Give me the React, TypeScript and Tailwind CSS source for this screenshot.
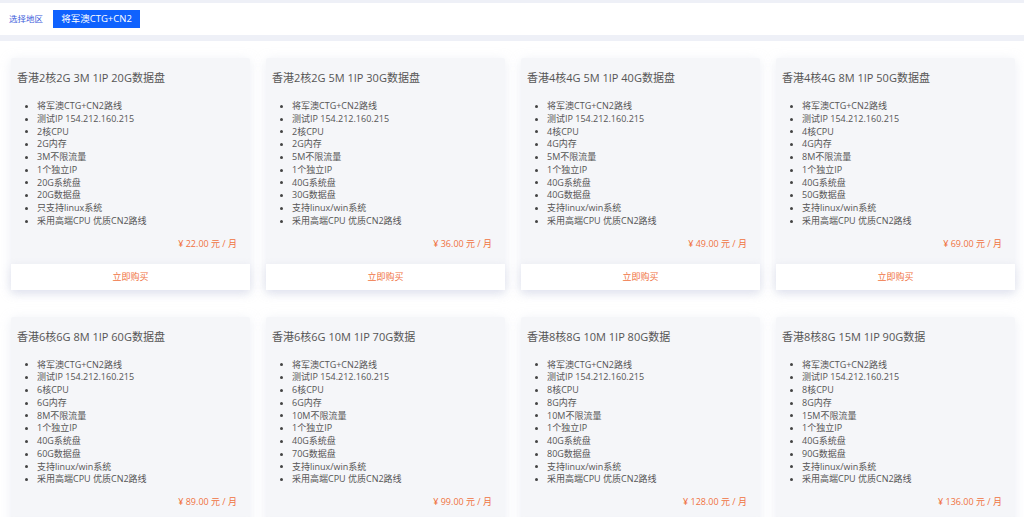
import React from "react";

type Plan = {
  title: string;
  cpu: string;
  ram: string;
  bw: string;
  sys: string;
  data: string;
  os: string;
  price: string;
};

const plans: Plan[] = [
  { title: "香港2核2G 3M 1IP 20G数据盘", cpu: "2核CPU", ram: "2G内存", bw: "3M不限流量", sys: "20G系统盘", data: "20G数据盘", os: "只支持linux系统", price: "22.00" },
  { title: "香港2核2G 5M 1IP 30G数据盘", cpu: "2核CPU", ram: "2G内存", bw: "5M不限流量", sys: "40G系统盘", data: "30G数据盘", os: "支持linux/win系统", price: "36.00" },
  { title: "香港4核4G 5M 1IP 40G数据盘", cpu: "4核CPU", ram: "4G内存", bw: "5M不限流量", sys: "40G系统盘", data: "40G数据盘", os: "支持linux/win系统", price: "49.00" },
  { title: "香港4核4G 8M 1IP 50G数据盘", cpu: "4核CPU", ram: "4G内存", bw: "8M不限流量", sys: "40G系统盘", data: "50G数据盘", os: "支持linux/win系统", price: "69.00" },
  { title: "香港6核6G 8M 1IP 60G数据盘", cpu: "6核CPU", ram: "6G内存", bw: "8M不限流量", sys: "40G系统盘", data: "60G数据盘", os: "支持linux/win系统", price: "89.00" },
  { title: "香港6核6G 10M 1IP 70G数据", cpu: "6核CPU", ram: "6G内存", bw: "10M不限流量", sys: "40G系统盘", data: "70G数据盘", os: "支持linux/win系统", price: "99.00" },
  { title: "香港8核8G 10M 1IP 80G数据", cpu: "8核CPU", ram: "8G内存", bw: "10M不限流量", sys: "40G系统盘", data: "80G数据盘", os: "支持linux/win系统", price: "128.00" },
  { title: "香港8核8G 15M 1IP 90G数据", cpu: "8核CPU", ram: "8G内存", bw: "15M不限流量", sys: "40G系统盘", data: "90G数据盘", os: "支持linux/win系统", price: "136.00" },
];

function Card({ p }: { p: Plan }) {
  const items = [
    "将军澳CTG+CN2路线",
    "测试IP 154.212.160.215",
    p.cpu,
    p.ram,
    p.bw,
    "1个独立IP",
    p.sys,
    p.data,
    p.os,
    "采用高端CPU 优质CN2路线",
  ];
  return (
    <div className="flex flex-col bg-[#f5f6f9] rounded-[2px] shadow-[0_2px_12px_rgba(200,205,225,0.35)]">
      <div className="pl-[6px] pr-[13px] pt-[10px]">
        <div className="text-[11px] leading-[20px] text-[#555] h-[20px] whitespace-nowrap">{p.title}</div>
        <ul className="mt-[12px] text-[9px] leading-[12.75px] text-[#555]">
          {items.map((t, i) => (
            <li key={i} className="flex items-center h-[12.75px]">
              <span className="ml-[8px] mr-[9px] w-[3px] h-[3px] rounded-full bg-[#444] shrink-0" />
              <span className="whitespace-nowrap">{t}</span>
            </li>
          ))}
        </ul>
        <div className="mt-[9px] text-right text-[9px] leading-[14px] text-[#f0723f]">
          ¥ {p.price} 元 / 月
        </div>
      </div>
      <div className="mt-[13px] h-[26px] bg-white flex items-center justify-center text-[9px] text-[#f0723f] shadow-[0_3px_10px_rgba(200,205,225,0.45)]">
        立即购买
      </div>
    </div>
  );
}

export default function App() {
  return (
    <div
      className="w-[1024px] min-h-[517px] bg-white"
      style={{ fontFamily: '"Open Sans", "Noto Sans CJK SC", sans-serif' }}
    >
      <div className="h-[3px] bg-[#eef0f7]" />
      <div className="h-[32px] bg-white flex items-center pl-[9px] gap-[10px]">
        <span className="text-[8.5px] text-[#3b5bdb]">选择地区</span>
        <span className="h-[18px] w-[87px] bg-[#0f62fe] text-white text-[9.5px] flex items-center justify-center whitespace-nowrap">
          将军澳CTG+CN2
        </span>
      </div>
      <div className="h-[6px] bg-[#eef0f7]" />
      <div className="grid grid-cols-4 gap-x-[16px] gap-y-[27px] pl-[11px] pr-[9px] pt-[17px]">
        {plans.map((p, i) => (
          <Card key={i} p={p} />
        ))}
      </div>
    </div>
  );
}
